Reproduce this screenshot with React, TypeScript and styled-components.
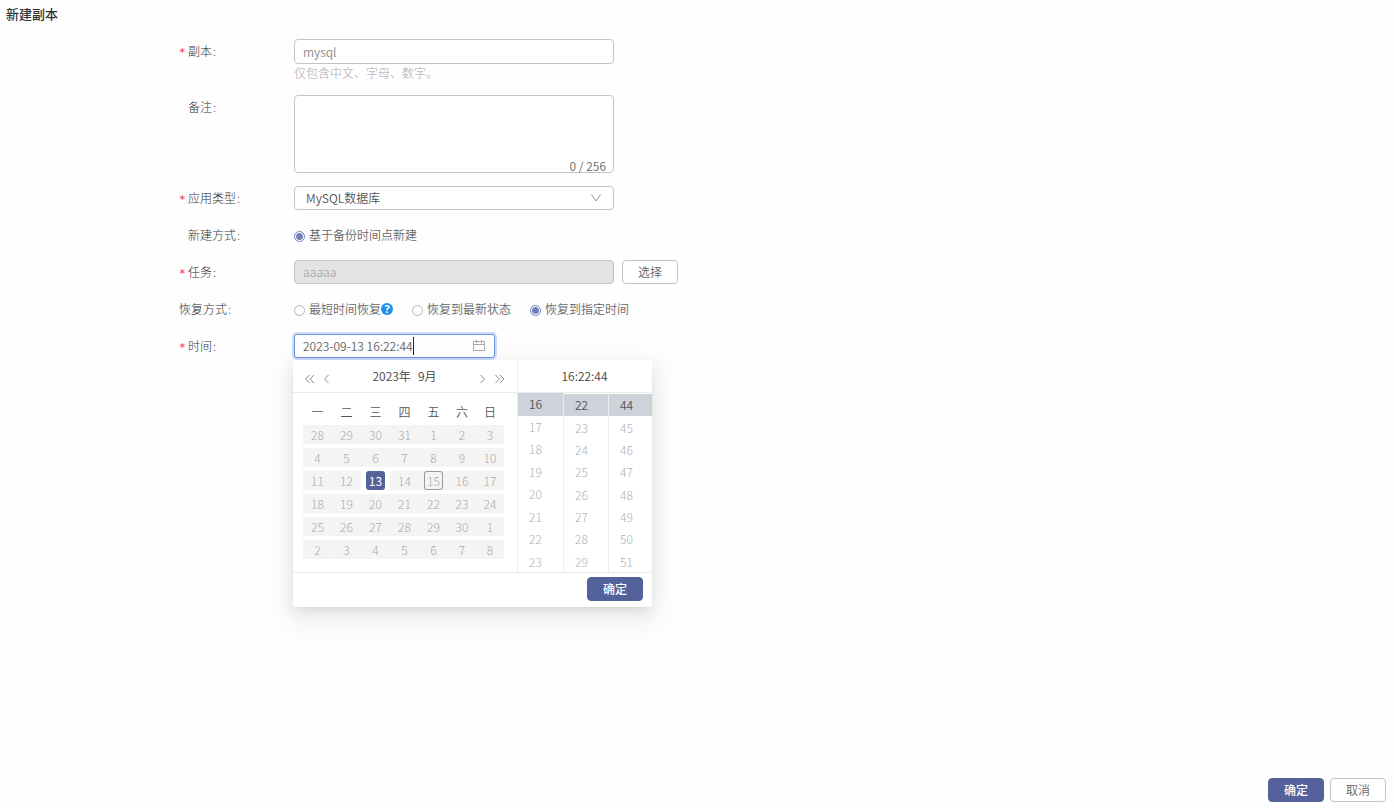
import React from 'react';
import styled, { createGlobalStyle, css } from 'styled-components';

const GlobalStyle = createGlobalStyle`
  *, *::before, *::after { box-sizing: border-box; }
  body {
    margin: 0;
    background: #fefefe;
    color: #666;
    font: 350 12px/18px "Noto Sans CJK SC", "Noto Sans", sans-serif;
  }
  button, input, select, textarea { font: inherit; color: inherit; margin: 0; }
  button { cursor: pointer; }
`;

const accent = '#54629c';

const Page = styled.div`
  min-height: 100vh;
  display: flex;
  flex-direction: column;
`;

const Title = styled.h1`
  margin: 0;
  padding: 0 6px;
  font-size: 13px;
  line-height: 28px;
  font-weight: 500;
  color: #333;
`;

const Form = styled.form`
  flex: 1;
  display: flex;
  flex-direction: column;
  gap: 13px;
  padding: 11px 24px 24px 179px;
`;

const Row = styled.div`
  display: grid;
  grid-template-columns: 115px 1fr;
  align-items: start;
`;

const Label = styled.label<{ $indent?: boolean }>`
  display: flex;
  line-height: 24px;
  color: #333;
  font-weight: 300;
  padding-left: ${p => (p.$indent ? '9px' : '0')};
  &::after { content: ':'; margin-left: 1px; }
`;

const Star = styled.span`
  width: 9px;
  height: 24px;
  color: #f5222d;
  font: 400 11px/28px "DejaVu Sans Mono", monospace;
`;

const Inline = styled.div`
  display: flex;
  align-items: center;
  gap: 8px;
`;

const box = css`
  border: 1px solid #c4c4c4;
  border-radius: 4px;
  background: #fff;
  outline: none;
`;

const TextInput = styled.input`
  ${box}
  display: block;
  width: 320px;
  height: 24px;
  padding: 0 8px 1px;
  color: #888;
  &:disabled { background: #e3e3e3; color: #aaa; opacity: 1; }
`;

const NameInput = styled(TextInput)`
  height: 25px;
`;

const Help = styled.div`
  line-height: 18px;
  color: #aaa;
  font-weight: 300;
`;

const NoteBox = styled.div`
  position: relative;
  width: 320px;
`;

const Note = styled.textarea`
  ${box}
  display: block;
  width: 100%;
  height: 78px;
  padding: 4px 8px;
  resize: none;
`;

const Counter = styled.span`
  position: absolute;
  right: 8px;
  bottom: -2px;
  line-height: 18px;
`;

const SelectBox = styled.div`
  ${box}
  width: 320px;
  height: 24px;
  display: grid;
  align-items: center;
  & > * { grid-area: 1 / 1; }
  & > svg { justify-self: end; margin-right: 11px; pointer-events: none; }
`;

const Select = styled.select`
  appearance: none;
  border: 0;
  outline: none;
  background: transparent;
  height: 22px;
  padding: 0 28px 0 11px;
  color: #555;
`;

const Radios = styled.div`
  display: flex;
  align-items: center;
  gap: 19px;
  height: 24px;
`;

const RadioLabel = styled.label`
  display: flex;
  align-items: center;
  gap: 4px;
  line-height: 24px;
`;

const Radio = styled.input`
  && { margin-top: 2px; }
  appearance: none;
  width: 11px;
  height: 11px;
  border: 1px solid #b5b5b5;
  border-radius: 50%;
  background: #fff;
  &:checked {
    border-color: #7180b5;
    background: radial-gradient(circle, #7481b8 0 3px, #fff 4px);
  }
`;

const HelpMark = styled.span`
  width: 12px;
  height: 12px;
  margin-left: -4px;
  border-radius: 50%;
  background: #1f8ff0;
  color: #fff;
  font: 700 11px/12px "Noto Sans", sans-serif;
  text-align: center;
`;

const Button = styled.button<{ $primary?: boolean }>`
  width: 56px;
  height: 24px;
  padding: 0;
  border: 1px solid ${p => (p.$primary ? accent : '#c4c4c4')};
  border-radius: 4px;
  background: ${p => (p.$primary ? accent : '#fff')};
  color: ${p => (p.$primary ? '#fff' : '#666')};
  font-weight: ${p => (p.$primary ? 500 : 350)};
  line-height: 22px;
`;

const Picker = styled.div`
  position: relative;
  width: 201px;
`;

const DateField = styled.div`
  display: flex;
  align-items: center;
  height: 24px;
  padding: 0 9px 0 8px;
  border: 1px solid #6f94e6;
  border-radius: 3px;
  background: #fff;
  box-shadow: 0 0 0 2px #cfdcf8;
  & > svg { margin-left: auto; }
`;

const DateInput = styled.input`
  width: 110px;
  height: 22px;
  padding: 0 0 2px;
  border: 0;
  outline: none;
  background: transparent;
`;

const Caret = styled.span`
  width: 1px;
  height: 18px;
  background: #222;
`;

const Popup = styled.div`
  position: absolute;
  top: 26px;
  left: -1px;
  width: 359px;
  z-index: 1;
  background: #fff;
  border-radius: 2px;
  box-shadow: 0 3px 6px -4px rgba(0, 0, 0, 0.12), 0 6px 16px 0 rgba(0, 0, 0, 0.08),
    0 9px 28px 8px rgba(0, 0, 0, 0.05);
`;

const Panels = styled.div`
  display: flex;
  border-bottom: 1px solid #ebebeb;
`;

const DatePanel = styled.div`
  width: 225px;
  border-right: 1px solid #ebebeb;
`;

const TimePanel = styled.div`
  flex: 1;
`;

const Head = styled.div`
  display: flex;
  align-items: center;
  gap: 2px;
  height: 33px;
  padding: 0 9px 0 8px;
  border-bottom: 1px solid #ebebeb;
  color: #444;
`;

const Month = styled.div`
  flex: 1;
  display: flex;
  justify-content: center;
  gap: 7px;
`;

const Arrow = styled.button`
  display: flex;
  padding: 5px 3px 0;
  border: 0;
  background: none;
`;

const Calendar = styled.table`
  width: 201px;
  margin: 8px 10px 11px;
  border-collapse: collapse;
  table-layout: fixed;
  text-align: center;
  th { width: 29px; height: 22px; padding: 0; font-weight: 350; color: #555; }
  th:nth-child(n + 6) { width: 28px; }
  td { height: 23px; padding: 2px 0; }
`;

const Day = styled.button<{ $state?: 'selected' | 'today' }>`
  display: flex;
  align-items: center;
  justify-content: center;
  width: 100%;
  height: 19px;
  padding: 0;
  border: 0;
  background: ${p => (p.$state === 'selected' ? '#fff' : '#f4f4f4')};
  color: #aaa;
  font-weight: 300;
  span {
    width: 19px;
    height: 19px;
    line-height: 19px;
    border-radius: 3px;
    ${p => p.$state === 'selected' && css`background: ${accent}; color: #fff; font-weight: 400;`}
    ${p => p.$state === 'today' && css`box-shadow: inset 0 0 0 1px #999;`}
  }
`;

const Columns = styled.div`
  display: grid;
  grid-template-columns: 46px 45px 1fr;
  height: 179px;
  overflow: hidden;
`;

const Column = styled.ul<{ $scrolled?: boolean }>`
  display: flex;
  flex-direction: column;
  height: 180px;
  margin: 0;
  padding: ${p => (p.$scrolled ? '1px 0 0' : '0')};
  list-style: none;
  border-right: 1px solid #ebebeb;
  &:last-child { border-right: 0; }
  li { flex: 1; display: flex; }
`;

const TimeItem = styled.button<{ $on?: boolean }>`
  flex: 1;
  padding: 0 0 0 11px;
  border: 0;
  text-align: left;
  background: ${p => (p.$on ? '#ced2db' : 'transparent')};
  color: ${p => (p.$on ? '#555' : '#b0b0b0')};
  font-weight: ${p => (p.$on ? 350 : 300)};
`;

const PopupFoot = styled.div`
  display: flex;
  justify-content: flex-end;
  padding: 4px 9px 6px;
`;

const Footer = styled.footer`
  display: flex;
  justify-content: flex-end;
  gap: 6px;
  padding: 0 8px 6px;
`;

const Chevron = ({ double, right }: { double?: boolean; right?: boolean }) => (
  <svg width={double ? 11 : 7} height="10" viewBox={double ? '0 0 11 10' : '0 0 7 10'} fill="none" stroke="#8a8a8a">
    {right ? (
      <>
        <path d="M1.5 1 5.500 5l-4 4" />
        {double && <path d="M6 1l4 4-4 4" />}
      </>
    ) : (
      <>
        <path d="M5.500 1l-4 4 4 4" />
        {double && <path d="M10 1 6 5l4 4" />}
      </>
    )}
  </svg>
);

const weekdays = ['一', '二', '三', '四', '五', '六', '日'];
const weeks = [
  [28, 29, 30, 31, 1, 2, 3],
  [4, 5, 6, 7, 8, 9, 10],
  [11, 12, 13, 14, 15, 16, 17],
  [18, 19, 20, 21, 22, 23, 24],
  [25, 26, 27, 28, 29, 30, 1],
  [2, 3, 4, 5, 6, 7, 8],
];
const times = [16, 22, 44];

const dayState = (d: number) => (d === 13 ? 'selected' : d === 15 ? 'today' : undefined);

export default function App() {
  return (
    <>
      <GlobalStyle />
      <Page>
        <Title>新建副本</Title>
        <Form onSubmit={e => e.preventDefault()}>
          <Row>
            <Label htmlFor="name"><Star>*</Star>副本</Label>
            <div>
              <NameInput id="name" defaultValue="mysql" />
              <Help>仅包含中文、字母、数字。</Help>
            </div>
          </Row>
          <Row>
            <Label htmlFor="note" $indent>备注</Label>
            <NoteBox>
              <Note id="note" maxLength={256} />
              <Counter>0 / 256</Counter>
            </NoteBox>
          </Row>
          <Row>
            <Label htmlFor="type"><Star>*</Star>应用类型</Label>
            <SelectBox>
              <Select id="type"><option>MySQL数据库</option></Select>
              <svg width="12" height="10" viewBox="0 0 12 10" fill="none" stroke="#999">
                <path d="M1.5 1.5 6 8l4.500-6.500" />
              </svg>
            </SelectBox>
          </Row>
          <Row>
            <Label as="span" $indent>新建方式</Label>
            <Radios>
              <RadioLabel><Radio type="radio" name="mode" defaultChecked />基于备份时间点新建</RadioLabel>
            </Radios>
          </Row>
          <Row>
            <Label htmlFor="task"><Star>*</Star>任务</Label>
            <Inline>
              <TextInput id="task" defaultValue="aaaaa" disabled />
              <Button type="button">选择</Button>
            </Inline>
          </Row>
          <Row>
            <Label as="span">恢复方式</Label>
            <Radios>
              <RadioLabel><Radio type="radio" name="restore" />最短时间恢复<HelpMark>?</HelpMark></RadioLabel>
              <RadioLabel><Radio type="radio" name="restore" />恢复到最新状态</RadioLabel>
              <RadioLabel><Radio type="radio" name="restore" defaultChecked />恢复到指定时间</RadioLabel>
            </Radios>
          </Row>
          <Row>
            <Label htmlFor="time"><Star>*</Star>时间</Label>
            <Picker>
              <DateField>
                <DateInput id="time" defaultValue="2023-09-13 16:22:44" />
                <Caret />
                <svg width="12" height="12" viewBox="0 0 12 12" fill="none" stroke="#aaa">
                  <path d="M.5 1.500h11v9H.5zM.5 4.500h11M3.500 0v3M8.500 0v3" />
                </svg>
              </DateField>
              <Popup>
                <Panels>
                  <DatePanel>
                    <Head>
                      <Arrow type="button" aria-label="上一年"><Chevron double /></Arrow>
                      <Arrow type="button" aria-label="上个月"><Chevron /></Arrow>
                      <Month><span>2023年</span><span>9月</span></Month>
                      <Arrow type="button" aria-label="下个月"><Chevron right /></Arrow>
                      <Arrow type="button" aria-label="下一年"><Chevron double right /></Arrow>
                    </Head>
                    <Calendar>
                      <thead>
                        <tr>{weekdays.map(w => <th key={w}>{w}</th>)}</tr>
                      </thead>
                      <tbody>
                        {weeks.map((week, i) => (
                          <tr key={i}>
                            {week.map(d => (
                              <td key={d}>
                                <Day type="button" $state={i === 2 ? dayState(d) : undefined}><span>{d}</span></Day>
                              </td>
                            ))}
                          </tr>
                        ))}
                      </tbody>
                    </Calendar>
                  </DatePanel>
                  <TimePanel>
                    <Head><Month>16:22:44</Month></Head>
                    <Columns>
                      {times.map((start, c) => (
                        <Column key={start} $scrolled={c > 0}>
                          {Array.from({ length: 8 }, (_, i) => (
                            <li key={i}><TimeItem type="button" $on={i === 0}>{start + i}</TimeItem></li>
                          ))}
                        </Column>
                      ))}
                    </Columns>
                  </TimePanel>
                </Panels>
                <PopupFoot><Button type="button" $primary>确定</Button></PopupFoot>
              </Popup>
            </Picker>
          </Row>
        </Form>
        <Footer>
          <Button type="button" $primary>确定</Button>
          <Button type="button">取消</Button>
        </Footer>
      </Page>
    </>
  );
}
